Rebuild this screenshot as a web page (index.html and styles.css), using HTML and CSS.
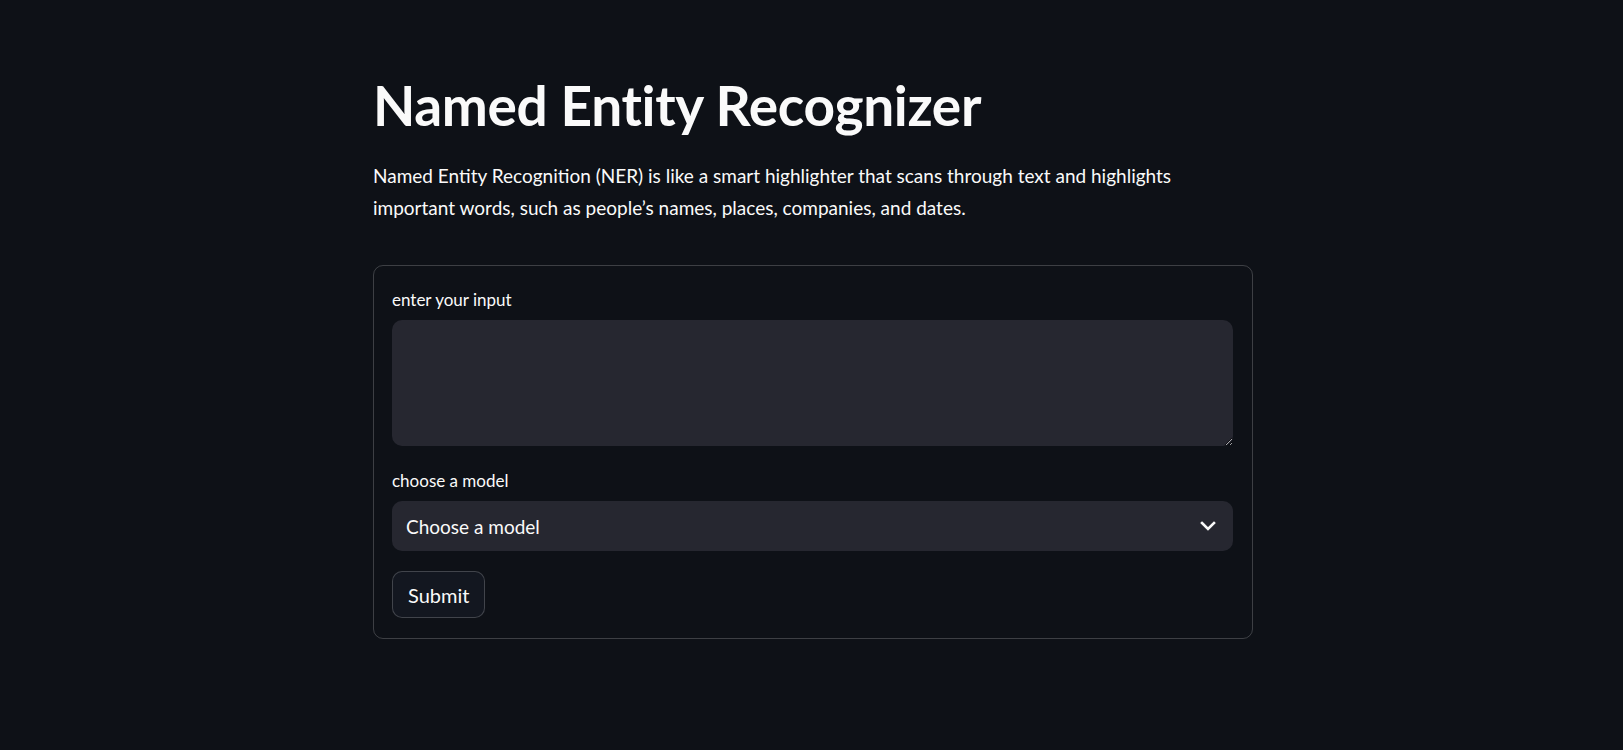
FILE: index.html
```html
<!DOCTYPE html>
<html lang="en">
<head>
<meta charset="utf-8">
<title>Named Entity Recognizer</title>
<link rel="stylesheet" href="styles.css">
</head>
<body>
<main class="main">
  <h1 class="title">Named Entity Recognizer</h1>
  <p class="intro">Named Entity Recognition (NER) is like a smart highlighter that scans through text and highlights important words, such as people’s names, places, companies, and dates.</p>
  <form class="form">
    <label class="label" for="inp">enter your input</label>
    <textarea id="inp" class="textarea"></textarea>
    <div class="field">
      <div class="label">choose a model</div>
      <div class="select">
        <span class="select-text">Choose a model</span>
        <svg class="chevron" width="16" height="10" viewBox="0 0 16 10"><path d="M2 2 L8 8 L14 2" fill="none" stroke="#fafafa" stroke-width="2.6" stroke-linecap="square"/></svg>
      </div>
    </div>
    <div class="actions">
      <button type="button" class="button">Submit</button>
    </div>
  </form>
</main>
</body>
</html>
```

FILE: styles.css
```css
html, body {
  margin: 0;
  padding: 0;
  background: #0e1117;
  color: #fafafa;
  color-scheme: dark;
  font-family: "Lato", "Liberation Sans", sans-serif;
}

.main {
  width: 880px;
  margin: 0 calc(50% - 438.5px);
  padding-top: 72px;
}

.title {
  margin: 0;
  font-size: 55px;
  font-weight: 700;
  line-height: 66px;
  letter-spacing: -0.35px;
}

.intro {
  margin: 22px 0 0;
  font-size: 19px;
  line-height: 32px;
}

.form {
  box-sizing: border-box;
  margin-top: 41px;
  border: 1px solid rgba(250, 250, 250, 0.2);
  border-radius: 10px;
  padding: 19px 19px 20px 18px;
  display: flex;
  flex-direction: column;
}

.label {
  display: block;
  height: 30px;
  margin-bottom: 5px;
  font-size: 17px;
  line-height: 30px;
}

.textarea {
  display: block;
  box-sizing: border-box;
  width: 100%;
  height: 126px;
  margin: 0;
  border: none;
  border-radius: 10px;
  background: #262730;
  color: #fafafa;
  font: inherit;
  padding: 12px 15px;
  resize: vertical;
  outline: none;
}

.field {
  margin-top: 20px;
}

.select {
  box-sizing: border-box;
  height: 50px;
  border-radius: 10px;
  background: #262730;
  display: flex;
  align-items: center;
  justify-content: space-between;
  padding: 0 17px 0 14px;
}

.select-text {
  font-size: 19px;
}

.chevron {
  display: block;
}

.actions {
  margin-top: 20px;
  display: flex;
}

.button {
  box-sizing: border-box;
  height: 47px;
  padding: 0 15px;
  border: 1px solid rgba(250, 250, 250, 0.2);
  border-radius: 10px;
  background: #131720;
  color: #fafafa;
  font-family: inherit;
  font-size: 20px;
  cursor: pointer;
}
```
